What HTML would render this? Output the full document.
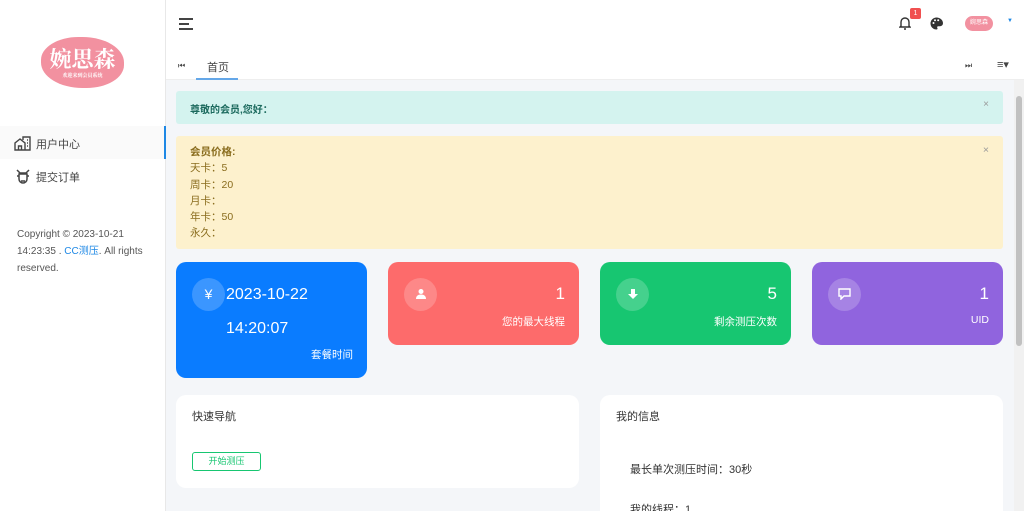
<!DOCTYPE html><html><head><meta charset="utf-8"><style>
*{box-sizing:border-box;margin:0;padding:0}
html{width:1024px;height:511px;overflow:hidden}
body{width:1024px;height:511px;overflow:hidden;font-family:"Liberation Sans","Noto Sans CJK SC",sans-serif;background:#f4f6f9;position:relative;color:#333}
.abs{position:absolute}
.side{left:0;top:0;width:166px;height:511px;background:#fff;border-right:1px solid #e8e8e8}
.card{border-radius:10px;color:#fff}
.ic{position:absolute;left:16px;top:16px;width:33px;height:33px;border-radius:50%;background:rgba(255,255,255,.2);text-align:center;line-height:33px;font-size:14px}
.ic svg{margin-top:10px}
.num{position:absolute;right:14px;top:22px;font-size:17px}
.lab{position:absolute;right:14px;top:52px;font-size:10.5px}
.panel{background:#fff;border-radius:10px}
</style></head><body>
<div class="abs side">
<div class="abs" style="left:41px;top:37px;width:83px;height:51px;background:#f291a0;border-radius:45% 50% 45% 50%;color:#fff;text-align:center;font-size:22px;line-height:44px;font-family:'Noto Serif CJK SC',serif;font-weight:bold">婉思森<div style="position:absolute;left:0;right:0;top:36px;font-size:5px;line-height:6px">欢迎来到会员系统</div></div>
<div class="abs" style="left:0;top:126px;width:166px;height:33px;background:#fafafa;border-right:2px solid #1e88e5"></div>
<svg class="abs" style="left:14px;top:136px" width="17" height="15" viewBox="0 0 17 15" fill="none" stroke="#444" stroke-width="1.4"><path d="M1 14V7l5-4 5 4v7H1zM4.5 14v-4h3v4M9 4V1h7v13h-5M13 4h1M13 7h1M13 10h1"/></svg>
<div class="abs" style="left:36px;top:136px;font-size:11px;color:#444">用户中心</div>
<svg class="abs" style="left:16px;top:169px" width="14" height="15" viewBox="0 0 14 15" fill="none" stroke="#444" stroke-width="1.5"><path d="M1 1l3 3h6l3-3M3 5h8v5a4 4 0 0 1-8 0zM5 12h4M1 7h2M11 7h2"/></svg>
<div class="abs" style="left:36px;top:169px;font-size:11px;color:#444">提交订单</div>
<div class="abs" style="left:17px;top:226px;font-size:10px;line-height:17px;color:#555;width:140px">Copyright © 2023-10-21 14:23:35 . <span style="color:#1e88e5">CC测压</span>. All rights reserved.</div>
</div>
<div class="abs" style="left:166px;top:0;width:858px;height:80px;background:#fff;border-bottom:1px solid #eee"></div>
<div class="abs" style="left:179px;top:18px;width:14px;height:1.5px;background:#444"></div>
<div class="abs" style="left:179px;top:23px;width:10px;height:1.5px;background:#444"></div>
<div class="abs" style="left:179px;top:28px;width:14px;height:1.5px;background:#444"></div>
<svg class="abs" style="left:899px;top:16px" width="12" height="14" viewBox="0 0 12 14" fill="none" stroke="#333" stroke-width="1.4"><path d="M2 10V6a4 4 0 0 1 8 0v4l1 1H1zM5 13h2"/></svg>
<div class="abs" style="left:910px;top:8px;width:11px;height:11px;background:#f05050;border-radius:2px;color:#fff;font-size:7px;text-align:center;line-height:11px">1</div>
<svg class="abs" style="left:930px;top:17px" width="13" height="13" viewBox="0 0 13 13"><path d="M6.5 0.5a6 6 0 0 0 0 12c1 0 1.3-.8.8-1.5-.5-.8 0-1.7 1-1.7h1.7a3 3 0 0 0 3-3c0-3.2-2.9-5.8-6.5-5.8z" fill="#333"/><circle cx="3.5" cy="6" r="1" fill="#fff"/><circle cx="5" cy="3.3" r="1" fill="#fff"/><circle cx="8.2" cy="3.3" r="1" fill="#fff"/></svg>
<div class="abs" style="left:965px;top:16px;width:28px;height:15px;background:#f291a0;border-radius:8px;color:#fff;font-size:6px;text-align:center;line-height:15px">婉思森</div>
<div class="abs" style="left:1007px;top:18px;font-size:6px;color:#1e88e5">▼</div>
<div class="abs" style="left:178px;top:61px;font-size:8px;color:#444">⏮</div>
<div class="abs" style="left:207px;top:59px;font-size:11px;color:#444">首页</div>
<div class="abs" style="left:196px;top:78px;width:42px;height:2px;background:#64a7e8"></div>
<div class="abs" style="left:965px;top:61px;font-size:8px;color:#444">⏭</div>
<div class="abs" style="left:997px;top:58px;font-size:11px;color:#444">≡▾</div>
<div class="abs" style="left:1014px;top:80px;width:10px;height:431px;background:#f1f1f1"></div>
<div class="abs" style="left:1016px;top:96px;width:6px;height:250px;background:#c1c1c1;border-radius:3px"></div>
<div class="abs" style="left:176px;top:91px;width:827px;height:33px;background:#d4f3ef;border-radius:3px;color:#1c6a5e;font-size:10px;font-weight:bold;padding:10px 14px">尊敬的会员,您好：<span style="position:absolute;right:14px;top:8px;color:#999;font-weight:normal">×</span></div>
<div class="abs" style="left:176px;top:136px;width:827px;height:113px;background:#fdf1cd;border-radius:3px;color:#8a6d1e;font-size:10.5px;line-height:16.3px;padding:8px 14px"><b>会员价格:</b><br>天卡：5<br>周卡：20<br>月卡：<br>年卡：50<br>永久：<span style="position:absolute;right:14px;top:6px;color:#999">×</span></div>
<div class="abs card" style="left:176px;top:262px;width:191px;height:116px;background:#0a7cff"><div class="ic">¥</div><div style="position:absolute;left:50px;top:24px;font-size:16px">2023-10-22</div><div style="position:absolute;left:50px;top:58px;font-size:16px">14:20:07</div><div class="lab" style="top:85px">套餐时间</div></div>
<div class="abs card" style="left:388px;top:262px;width:191px;height:83px;background:#fd6b6b"><div class="ic"><svg width="12" height="12" viewBox="0 0 12 12" fill="#fff"><circle cx="6" cy="3.5" r="2.5"/><path d="M1 11c0-3 2-4.5 5-4.5s5 1.5 5 4.5z"/></svg></div><div class="num">1</div><div class="lab">您的最大线程</div></div>
<div class="abs card" style="left:600px;top:262px;width:191px;height:83px;background:#17c671"><div class="ic"><svg width="12" height="12" viewBox="0 0 12 12" fill="#fff"><path d="M4 1h4v5h3l-5 5-5-5h3z"/></svg></div><div class="num">5</div><div class="lab">剩余测压次数</div></div>
<div class="abs card" style="left:812px;top:262px;width:191px;height:83px;background:#9064de"><div class="ic"><svg width="13" height="12" viewBox="0 0 13 12" fill="none" stroke="#fff" stroke-width="1.4"><path d="M1 1h11v7H6l-3 3V8H1z"/></svg></div><div class="num">1</div><div class="lab">UID</div></div>
<div class="abs panel" style="left:176px;top:395px;width:403px;height:93px"><div style="position:absolute;left:16px;top:13px;font-size:11px">快速导航</div><div style="position:absolute;left:16px;top:57px;width:69px;height:19px;border:1px solid #17c671;border-radius:3px;color:#17c671;font-size:9px;text-align:center;line-height:17px">开始测压</div></div>
<div class="abs panel" style="left:600px;top:395px;width:403px;height:116px;border-radius:10px 10px 0 0"><div style="position:absolute;left:16px;top:13px;font-size:11px">我的信息</div><div style="position:absolute;left:30px;top:66px;font-size:11px">最长单次测压时间：30秒</div><div style="position:absolute;left:30px;top:106px;font-size:11px">我的线程：1</div></div>
</body></html>
